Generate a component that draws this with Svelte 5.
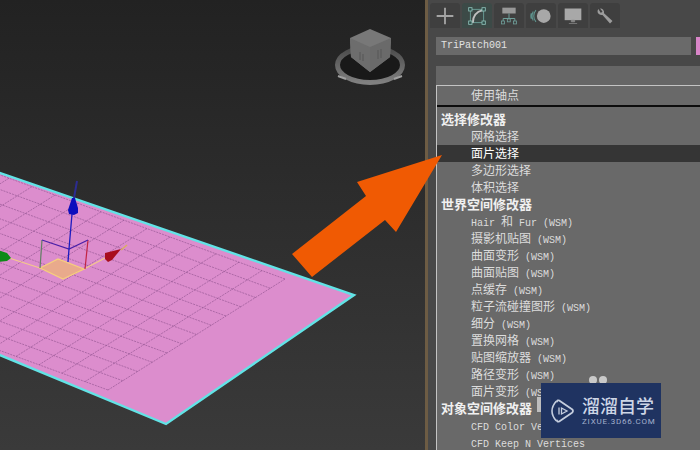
<script>
	// modifier list, kind: h = group header, on = highlighted row
	const rows = [
		{ t: '选择修改器', kind: 'h' },
		{ t: '网格选择' },
		{ t: '面片选择', kind: 'on' },
		{ t: '多边形选择' },
		{ t: '体积选择' },
		{ t: '世界空间修改器', kind: 'h' },
		{ t: 'Hair 和 Fur (WSM)' },
		{ t: '摄影机贴图 (WSM)' },
		{ t: '曲面变形 (WSM)' },
		{ t: '曲面贴图 (WSM)' },
		{ t: '点缓存 (WSM)' },
		{ t: '粒子流碰撞图形 (WSM)' },
		{ t: '细分 (WSM)' },
		{ t: '置换网格 (WSM)' },
		{ t: '贴图缩放器 (WSM)' },
		{ t: '路径变形 (WSM)' },
		{ t: '面片变形 (WSM)' },
		{ t: '对象空间修改器', kind: 'h' },
		{ t: 'CFD Color Vertices' },
		{ t: 'CFD Keep N Vertices' }
	];

	// latin runs get the half width mono, the rest stays CJK
	function parts(text) {
		return text.split(/([\x00-\x7f]+)/).filter(Boolean).map((s) => ({
			s,
			latin: /^[\x00-\x7f]+$/.test(s)
		}));
	}

	// patch mesh lines
	const R = [285, 279];
	const U = [-23, -8.4];
	const V = [-14.75, 9.25];
	const NU = 15;
	const NV = 12;
	const mesh = [];
	for (let i = 0; i <= NV; i++) {
		const a = [R[0] + V[0] * i, R[1] + V[1] * i];
		mesh.push([a[0], a[1], a[0] + U[0] * NU, a[1] + U[1] * NU]);
	}
	for (let j = 0; j <= NU; j++) {
		const a = [R[0] + U[0] * j, R[1] + U[1] * j];
		mesh.push([a[0], a[1], a[0] + V[0] * NV, a[1] + V[1] * NV]);
	}
</script>

<div class="app">
	<svg class="viewport" viewBox="0 0 425 450" width="425" height="450">
		<defs>
			<linearGradient id="bg" x1="0" y1="0" x2="0" y2="1">
				<stop offset="0" stop-color="#222222" />
				<stop offset="1" stop-color="#3a3a3a" />
			</linearGradient>
			<linearGradient id="ring" x1="0" y1="0" x2="0" y2="1">
				<stop offset="0" stop-color="#4a4a4a" />
				<stop offset="1" stop-color="#808080" />
			</linearGradient>
		</defs>
		<rect width="425" height="450" fill="url(#bg)" />

		<!-- viewcube -->
		<ellipse cx="370" cy="65" rx="32.5" ry="17.5" fill="#191919" stroke="url(#ring)" stroke-width="5" />
		<path d="M338 76l8 3M402 76l-8 3" stroke="#a0a0a0" stroke-width="2" />
		<polygon points="370,29 391,38 390,57 370,72 351,57 350,38" fill="#787878" />
		<polygon points="350,38 370,47 370,72 351,57" fill="#6d6d6d" />
		<polygon points="391,38 370,47 370,72 390,57" fill="#6a6a6a" />
		<path d="M360 52v8M363 54v7M378 50v9M381 49v9" stroke="#565656" stroke-width="1" />

		<!-- patch -->
		<polygon points="-10,169.5 354,295 166,424 -10,351" fill="#dc8dcd" stroke="#62e3e6" stroke-width="2.4" />
		<g stroke="#8b4f8b" stroke-width="0.8" stroke-dasharray="2 1" stroke-opacity="0.75">
			{#each mesh as m}
				<line x1={m[0]} y1={m[1]} x2={m[2]} y2={m[3]} />
			{/each}
		</g>

		<!-- gizmo -->
		<polygon points="40,268 58,259 84,269 63,279" fill="#e9aa8c" stroke="#f6cf7c" stroke-width="1.2" />
		<path d="M9 258L40 268M84 269L107 257" stroke="#f4c98a" stroke-width="1.2" fill="none" />
		<path d="M40 268L42 240" stroke="#5f7f62" stroke-width="1.2" />
		<path d="M85 269L88 240" stroke="#c22443" stroke-width="1.2" />
		<path d="M42 240L69 249L88 240" stroke="#4a20a8" stroke-width="1.2" fill="none" />
		<path d="M68 262L69 249L72 214" stroke="#1c1cc0" stroke-width="1.3" fill="none" />
		<polygon points="72,198 75,198 78,208 78,213 74,215 69,214 68,210" fill="#0d0dbd" />
		<path d="M74 198L77 181" stroke="#2c2c90" stroke-width="2" />
		<polygon points="105,253 121,249 112,260 108,262 105,259" fill="#a80e1e" />
		<path d="M121 250L127 245" stroke="#d8b060" stroke-width="1.5" />
		<polygon points="-2,250 7,253 11,258 7,261 -2,262" fill="#0c8a18" />
	</svg>

	<div class="divider"></div>

	<div class="panel">
		<div class="tabs">
			<div class="tab">
				<svg viewBox="0 0 24 24" width="20" height="20">
					<path d="M12 2v20M2 12h20" stroke="#a4a4a4" stroke-width="2.2" />
				</svg>
			</div>
			<div class="tab active">
				<svg viewBox="0 0 24 24" width="20" height="20">
					<rect x="4" y="4" width="16" height="16" fill="none" stroke="#6fa8a0" stroke-width="1" />
					<path d="M7 20C7 12 11 7 19 5" fill="none" stroke="#c0c0c0" stroke-width="2.2" />
					<g fill="#2f4f4b" stroke="#8fc0b8" stroke-width="1">
						<rect x="2" y="2" width="4" height="4" />
						<rect x="18" y="2" width="4" height="4" />
						<rect x="2" y="18" width="4" height="4" />
						<rect x="18" y="18" width="4" height="4" />
					</g>
				</svg>
			</div>
			<div class="tab">
				<svg viewBox="0 0 24 24" width="20" height="20">
					<rect x="4" y="2" width="16" height="7" fill="#989898" />
					<path d="M12 9v6M5 18v-3h14v3" fill="none" stroke="#6f9f9a" stroke-width="1.2" />
					<g fill="none" stroke="#6f9f9a" stroke-width="1">
						<rect x="3" y="18" width="3.5" height="3.5" />
						<rect x="10" y="15.5" width="3.5" height="3.5" />
						<rect x="17.5" y="18" width="3.5" height="3.5" />
					</g>
				</svg>
			</div>
			<div class="tab">
				<svg viewBox="0 0 24 24" width="22" height="22">
					<circle cx="15" cy="12" r="7.5" fill="#a8a8a8" />
					<path d="M6.5 5.5a10 10 0 0 0 0 13M3.5 7a11 11 0 0 0 0 10M1.5 9a9 9 0 0 0 0 6" fill="none" stroke="#5f9690" stroke-width="1.2" />
				</svg>
			</div>
			<div class="tab">
				<svg viewBox="0 0 24 24" width="20" height="20">
					<rect x="2" y="3" width="20" height="14" fill="#a8a8a8" />
					<path d="M10 17h4v2h-4zM7 21h10" fill="#909090" stroke="#909090" stroke-width="0.8" />
				</svg>
			</div>
			<div class="tab">
				<svg viewBox="0 0 24 24" width="20" height="20">
					<path d="M4 3.5a5 5 0 0 0 1 6.5a5 5 0 0 0 4 .7L18 21l3-3L10.8 8.8a5 5 0 0 0-1-4.3A5 5 0 0 0 6 3l3 3.5L7 8.5Z" fill="#9c9c9c" />
				</svg>
			</div>
		</div>

		<div class="name-row">
			<div class="name">TriPatch001</div>
			<div class="swatch"></div>
		</div>

		<div class="combo"></div>

		<div class="list">
			<div class="row first"><span class="cjk">使用轴点</span></div>
			<div class="rule"></div>
			{#each rows as row}
				<div class="row" class:head={row.kind === 'h'} class:on={row.kind === 'on'}>
					{#each parts(row.t) as p}
						<span class={p.latin ? 'latin' : 'cjk'}>{p.s}</span>
					{/each}
				</div>
			{/each}
		</div>
	</div>

	<!-- annotation arrow, runs over viewport and panel -->
	<svg class="arrow" viewBox="0 0 700 450" width="700" height="450">
		<polygon points="442,155 357,182 366,196 292,254 312,277 385,220 396,232" fill="#f05a03" />
	</svg>

	<!-- watermark -->
	<div class="stub"></div>
	<div class="dots"><i></i><i></i></div>
	<div class="mark">
		<svg viewBox="0 0 26 26" width="26" height="26">
			<path d="M7 3.5C4 7 3 10 3 13s1 6 4 9.5" fill="none" stroke="#c5cede" stroke-width="1.6" stroke-linecap="round" />
			<path d="M8 3.5c0-1 1.3-1.5 2.2-1L23 11.3c1.3 1 1.3 2.4 0 3.4L10.2 23.5c-1 .5-2.2 0-2.2-1" fill="none" stroke="#c5cede" stroke-width="1.8" stroke-linecap="round" />
			<path d="M10 9.5v7M12.5 10l5.5 3l-5.5 3Z" fill="none" stroke="#c5cede" stroke-width="1.3" />
		</svg>
		<div class="brand">
			<div class="brand-cn">溜溜自学</div>
			<div class="brand-url">ZIXUE.3D66.COM</div>
		</div>
	</div>
</div>

<style>
	:global(body) {
		background: #474747;
	}
	.app {
		position: relative;
		display: flex;
		width: 700px;
		height: 450px;
		overflow: hidden;
	}
	.viewport {
		display: block;
		flex: none;
	}
	.divider {
		width: 3px;
		flex: none;
		background: #6d5c44;
	}
	.panel {
		flex: 1;
		min-width: 0;
		display: flex;
		flex-direction: column;
		background: #484848;
		padding: 3px 0 0 8px;
	}
	.tabs {
		display: flex;
		gap: 2px;
		height: 25px;
		margin-left: -6px;
	}
	.tab {
		width: 30px;
		background: #3f3f3f;
		border-radius: 3px 3px 0 0;
		display: flex;
		align-items: center;
		justify-content: center;
	}
	.tab.active {
		background: #3c4a47;
	}
	.name-row {
		display: flex;
		gap: 5px;
		margin-top: 9px;
		height: 18px;
	}
	.name {
		width: 250px;
		background: #6a6a6a;
		color: #e2e2e2;
		font: 10px/18px "Liberation Mono", monospace;
		padding-left: 5px;
	}
	.swatch {
		flex: 1;
		background: #d985c8;
	}
	.combo {
		height: 19px;
		margin-top: 11px;
		background: #666666;
	}
	.list {
		flex: 1;
		min-height: 0;
		background: #696969;
		border-left: 1px solid #c4c4c4;
		border-top: 1px solid #c4c4c4;
		padding-top: 1px;
	}
	.row {
		height: 17px;
		line-height: 16px;
		padding-left: 34px;
		color: #dcdcdc;
		white-space: pre;
	}
	.row.first {
		height: 16px;
	}
	.rule {
		height: 2px;
		background: #0c0c0c;
		margin: 2px 0 4px;
	}
	.row.head {
		padding-left: 4px;
		color: #f0f0f0;
		font-weight: 700;
	}
	.row.head .cjk {
		font-size: 13px;
	}
	.row.on {
		background: #353535;
		color: #ffffff;
	}
	.cjk {
		font-family: "Noto Sans CJK SC", sans-serif;
		font-size: 12px;
		line-height: 16px;
	}
	.latin {
		font-family: "Liberation Mono", monospace;
		font-size: 10px;
		line-height: 16px;
	}
	.arrow {
		position: absolute;
		left: 0;
		top: 0;
		pointer-events: none;
	}
	.mark {
		position: absolute;
		left: 541px;
		top: 383px;
		width: 120px;
		height: 55px;
		box-sizing: border-box;
		background: #1f3361;
		display: flex;
		align-items: center;
		gap: 7px;
		padding-left: 8px;
	}
	.brand {
		display: flex;
		flex-direction: column;
		gap: 1px;
	}
	.brand-cn {
		font: 500 18px/22px "Noto Sans CJK SC", sans-serif;
		color: #cdd6e6;
	}
	.brand-url {
		font: 8px/10px Roboto, sans-serif;
		letter-spacing: 0.8px;
		color: #a3b0cc;
	}
	.stub {
		position: absolute;
		left: 537px;
		top: 397px;
		width: 4px;
		height: 15px;
		background: #bdbdbd;
	}
	.dots {
		position: absolute;
		left: 589px;
		top: 376px;
		display: flex;
		gap: 2px;
	}
	.dots i {
		display: block;
		width: 8px;
		height: 8px;
		border-radius: 50%;
		background: #c9c9c9;
	}
</style>
